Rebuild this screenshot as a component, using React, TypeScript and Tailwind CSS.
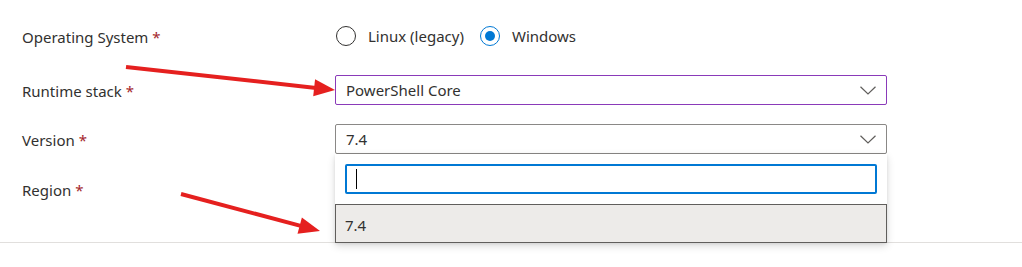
import React from "react";

const Chevron = () => (
  <svg width="16" height="9" viewBox="0 0 16 9" className="shrink-0">
    <path d="M0.5 0.8 L8 8 L15.5 0.8" fill="none" stroke="#605e5c" strokeWidth="1.2" />
  </svg>
);

function Arrow({ x1, y1, x2, y2 }: { x1: number; y1: number; x2: number; y2: number }) {
  const dx = x2 - x1;
  const dy = y2 - y1;
  const len = Math.hypot(dx, dy);
  const ux = dx / len;
  const uy = dy / len;
  const hl = 21;
  const hw = 8.5;
  const bx = x2 - ux * hl;
  const by = y2 - uy * hl;
  const px = -uy;
  const py = ux;
  const pts = `${x2},${y2} ${bx + px * hw},${by + py * hw} ${bx - px * hw},${by - py * hw}`;
  return (
    <g>
      <line x1={x1} y1={y1} x2={bx + ux * 2} y2={by + uy * 2} stroke="#e5201f" strokeWidth="4" />
      <polygon points={pts} fill="#e5201f" />
    </g>
  );
}

const Label = ({ text }: { text: string }) => (
  <div className="w-[335px] shrink-0 pl-[22px] pt-[3px] text-[15px] text-[#323130]">
    {text} <span className="text-[#a4262c]">*</span>
  </div>
);

export default function App() {
  return (
    <div
      className="relative w-[1022px] h-[267px] overflow-hidden bg-white text-[#323130]"
      style={{ fontFamily: '"Noto Sans", "Open Sans", sans-serif' }}
    >
      <div className="flex flex-col pt-[21px]">
        <div className="flex h-[30px] items-center">
          <Label text="Operating System" />
          <div className="flex items-center text-[15px]">
            <div className="ml-[1px] h-[20px] w-[20px] rounded-full border border-[#323130]" />
            <span className="ml-[12px]">Linux (legacy)</span>
            <div className="ml-[16px] flex h-[20px] w-[20px] items-center justify-center rounded-full border border-[#0078d4]">
              <div className="h-[10px] w-[10px] rounded-full bg-[#0078d4]" />
            </div>
            <span className="ml-[12px]">Windows</span>
          </div>
        </div>
        <div className="mt-[24px] flex h-[30px] items-center">
          <Label text="Runtime stack" />
          <div className="flex h-[30px] w-[552px] items-center justify-between rounded-[2px] border border-[#8a3ab9] pl-[10px] pr-[10px] text-[15px]">
            <span>PowerShell Core</span>
            <Chevron />
          </div>
        </div>
        <div className="mt-[19px] flex h-[30px] items-center">
          <Label text="Version" />
          <div className="flex h-[30px] w-[552px] items-center justify-between rounded-[2px] border border-[#8a8886] pl-[10px] pr-[10px] text-[15px]">
            <span>7.4</span>
            <Chevron />
          </div>
        </div>
        <div className="mt-[20px] flex h-[30px] items-center">
          <Label text="Region" />
        </div>
        <div className="mt-[38px] h-px w-full bg-[#e1dfdd]" />
      </div>

      <div className="absolute left-[335px] top-[154px] flex w-[552px] flex-col bg-white shadow-[0_3px_8px_rgba(0,0,0,0.14),0_1px_3px_rgba(0,0,0,0.08)]">
        <div className="px-[10px] pt-[10px] pb-[10px]">
          <div className="flex h-[30px] items-center rounded-[2px] border-2 border-[#0078d4] pl-[9px]">
            <div className="h-[20px] w-px bg-[#000]" />
          </div>
        </div>
        <div className="flex h-[39px] items-center border border-[#605e5c] bg-[#edebe9] pl-[9px] pt-[3px] text-[15px]">
          7.4
        </div>
      </div>

      <svg className="pointer-events-none absolute left-0 top-0" width="1022" height="267">
        <Arrow x1={126} y1={67} x2={335} y2={90} />
        <Arrow x1={181} y1={194} x2={320} y2={231} />
      </svg>
    </div>
  );
}
